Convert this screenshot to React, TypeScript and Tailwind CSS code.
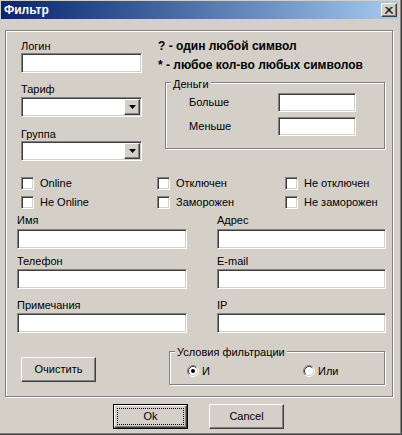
import React from "react";

const sunken =
  "bg-white border border-t-[#808080] border-l-[#808080] border-b-white border-r-white shadow-[inset_1px_1px_0_#404040,inset_-1px_-1px_0_#d4d0c8]";
const raised =
  "bg-[#d4d0c8] border border-t-white border-l-white border-b-[#404040] border-r-[#404040] shadow-[inset_-1px_-1px_0_#808080]";
const etched =
  "border border-[#808080] shadow-[inset_1px_1px_0_#ffffff,1px_1px_0_#ffffff]";

function Check({ label }: { label: string }) {
  return (
    <div className="flex items-center gap-[6px] h-[13px]">
      <div className={`w-[13px] h-[13px] shrink-0 ${sunken}`} />
      <span className="leading-[13px] whitespace-nowrap">{label}</span>
    </div>
  );
}

function Radio({ checked }: { checked?: boolean }) {
  return (
    <svg width="12" height="12" viewBox="0 0 12 12" className="shrink-0">
      <circle cx="6" cy="6" r="4.5" fill="#ffffff" />
      <path d="M2.11 9.89 A5.5 5.5 0 0 1 9.89 2.11" fill="none" stroke="#808080" strokeWidth="1" />
      <path d="M9.89 2.11 A5.5 5.5 0 0 1 2.11 9.89" fill="none" stroke="#ffffff" strokeWidth="1" />
      <path d="M2.82 9.18 A4.5 4.5 0 0 1 9.18 2.82" fill="none" stroke="#404040" strokeWidth="1" />
      <path d="M9.18 2.82 A4.5 4.5 0 0 1 2.82 9.18" fill="none" stroke="#d4d0c8" strokeWidth="1" />
      {checked && <circle cx="6" cy="6" r="2" fill="#000000" />}
    </svg>
  );
}

function Combo() {
  return (
    <div className={`w-[121px] h-[20px] flex justify-end ${sunken} p-[1px]`}>
      <div className={`w-[16px] h-full ${raised} flex items-center justify-center`}>
        <svg width="7" height="4" viewBox="0 0 7 4">
          <polygon points="0,0 7,0 3.5,4" fill="#000000" />
        </svg>
      </div>
    </div>
  );
}

export default function App() {
  return (
    <div className="w-[402px] h-[435px] bg-[#d4d0c8] border-r border-b border-[#404040] font-['Liberation_Sans',Arial,sans-serif] text-[11px] leading-[13px] text-black overflow-hidden">
      <div className="h-full border-r border-b border-[#808080] pl-[1px] pt-[1px]">
        {/* Title bar */}
        <div className="w-[397px] h-[18px] flex items-center bg-linear-to-r from-[#0a246a] to-[#a6caf0] pl-[3px] pr-[1px]">
          <span className="text-white font-bold text-[12px] leading-[14px]">Фильтр</span>
          <div className={`ml-auto w-[16px] h-[14px] ${raised} flex items-center justify-center`}>
            <svg width="8" height="7" viewBox="0 0 8 7">
              <path d="M0.5 0 L7.5 7 M1.5 0 L8 6.5 M7.5 0 L0.5 7 M6.5 0 L0 6.5" stroke="#000000" strokeWidth="1" />
            </svg>
          </div>
        </div>

        {/* Main frame */}
        <div className={`ml-[4px] mt-[11px] w-[388px] h-[367px] ${etched}`}>
          {/* Top section */}
          <div className="flex">
            <div className="ml-[15px] w-[121px] pt-[9px] flex flex-col">
              <span className="leading-[13px]">Логин</span>
              <div className={`w-[121px] h-[20px] ${sunken}`} />
              <span className="leading-[13px] mt-[10px]">Тариф</span>
              <div className="mt-[1px]">
                <Combo />
              </div>
              <span className="leading-[13px] mt-[11px]">Группа</span>
              <Combo />
            </div>
            <div className="ml-[16px] pt-[9px] flex flex-col">
              <span className="leading-[13px] font-bold text-[12px] whitespace-nowrap">? - один любой символ</span>
              <span className="leading-[13px] font-bold text-[12px] mt-[6px] whitespace-nowrap">* - любое кол-во любых символов</span>
              <div className={`relative ml-[7px] mt-[10px] w-[220px] h-[67px] ${etched} pt-[10px]`}>
                <span className="absolute left-[5px] top-[-5px] px-[2px] bg-[#d4d0c8] leading-[13px]">Деньги</span>
                <div className="flex items-center h-[19px]">
                  <span className="w-[112px] pl-[23px]">Больше</span>
                  <div className={`w-[78px] h-[19px] ${sunken}`} />
                </div>
                <div className="flex items-center h-[19px] mt-[5px]">
                  <span className="w-[112px] pl-[23px]">Меньше</span>
                  <div className={`w-[78px] h-[19px] ${sunken}`} />
                </div>
              </div>
            </div>
          </div>

          {/* Checkboxes */}
          <div className="grid grid-cols-[136px_128px_1fr] pl-[15px] gap-y-[6px] mt-[16px]">
            <Check label="Online" />
            <Check label="Отключен" />
            <Check label="Не отключен" />
            <Check label="Не Online" />
            <Check label="Заморожен" />
            <Check label="Не заморожен" />
          </div>

          {/* Fields */}
          <div className="ml-[11px] flex gap-[30px] mt-[5px]">
            <div className="flex flex-col">
              <span className="leading-[13px]">Имя</span>
              <div className={`mt-[2px] w-[170px] h-[20px] ${sunken}`} />
            </div>
            <div className="flex flex-col">
              <span className="leading-[13px]">Адрес</span>
              <div className={`mt-[2px] w-[169px] h-[20px] ${sunken}`} />
            </div>
          </div>
          <div className="ml-[11px] flex gap-[30px] mt-[6px]">
            <div className="flex flex-col">
              <span className="leading-[13px]">Телефон</span>
              <div className={`mt-[1px] w-[170px] h-[20px] ${sunken}`} />
            </div>
            <div className="flex flex-col">
              <span className="leading-[13px]">E-mail</span>
              <div className={`mt-[1px] w-[169px] h-[20px] ${sunken}`} />
            </div>
          </div>
          <div className="ml-[11px] flex gap-[30px] mt-[10px]">
            <div className="flex flex-col">
              <span className="leading-[13px]">Примечания</span>
              <div className={`mt-[1px] w-[170px] h-[20px] ${sunken}`} />
            </div>
            <div className="flex flex-col">
              <span className="leading-[13px]">IP</span>
              <div className={`mt-[1px] w-[169px] h-[20px] ${sunken}`} />
            </div>
          </div>

          {/* Bottom */}
          <div className="flex items-start">
            <div className={`ml-[15px] mt-[24px] w-[75px] h-[25px] ${raised} flex items-center justify-center`}>
              Очистить
            </div>
            <div className={`relative ml-[73px] mt-[18px] w-[216px] h-[34px] ${etched} pt-[13px] pl-[17px] flex`}>
              <span className="absolute left-[5px] top-[-6px] px-[2px] bg-[#d4d0c8] leading-[13px] whitespace-nowrap">
                Условия фильтрации
              </span>
              <div className="w-[116px] flex items-center gap-[3px] h-[12px]">
                <Radio checked />
                <span>И</span>
              </div>
              <div className="flex items-center gap-[3px] h-[12px]">
                <Radio />
                <span>Или</span>
              </div>
            </div>
          </div>
        </div>

        {/* Buttons */}
        <div className="flex mt-[7px] ml-[112px] gap-[21px]">
          <div className="w-[75px] h-[25px] border border-black">
            <div className={`w-full h-full ${raised} p-[2px]`}>
              <div className="w-full h-full border border-dotted border-black flex items-center justify-center">
                Ok
              </div>
            </div>
          </div>
          <div className={`w-[75px] h-[25px] ${raised} flex items-center justify-center`}>Cancel</div>
        </div>
      </div>
    </div>
  );
}
